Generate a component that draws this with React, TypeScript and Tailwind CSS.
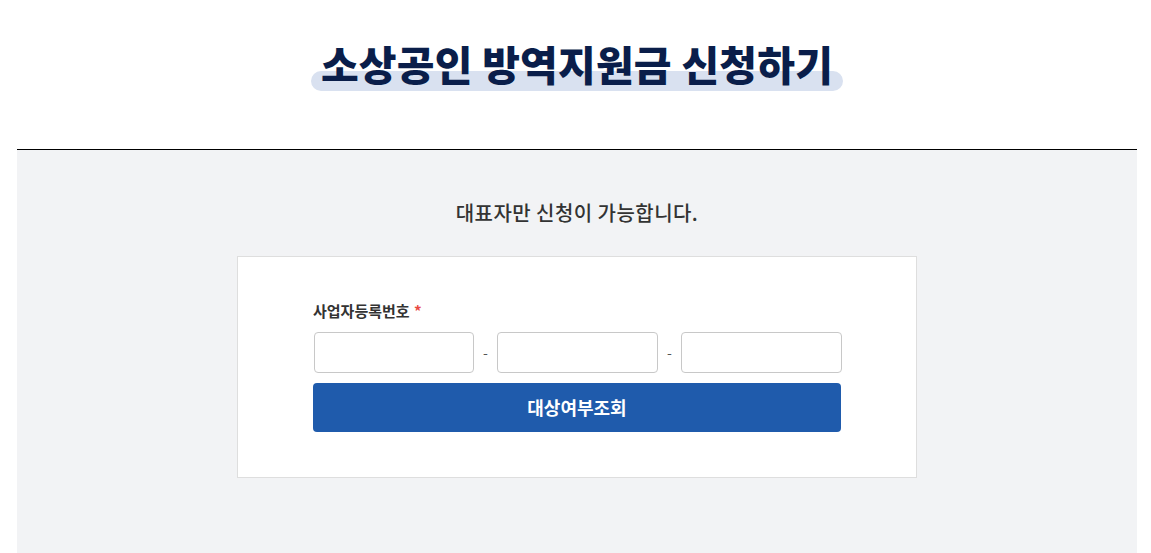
export default function App() {
  const font = { fontFamily: '"Noto Sans CJK KR", "Noto Sans", sans-serif' };
  return (
    <div className="w-[1151px] h-[553px] overflow-hidden bg-white" style={font}>
      <div className="ml-[17px] w-[1120px]">
        <div className="h-[149px] flex justify-center pt-[37px]">
          <div className="relative h-[56px] flex items-start">
            <div className="absolute left-[1px] right-[1px] top-[34px] h-[20px] rounded-full bg-[#d9e1f0]" />
            <h1 className="relative px-[11px] text-[41px] leading-[52px] font-black text-[#0a1e4a] tracking-[0.2px]">
              소상공인 방역지원금 신청하기
            </h1>
          </div>
        </div>
        <div className="border-t border-black bg-[#f2f3f5] h-[404px] pt-[49px] flex flex-col items-center">
          <p className="text-[20px] leading-[28px] font-medium text-[#333] tracking-[0.45px]">
            대표자만 신청이 가능합니다.
          </p>
          <div className="mt-[29px] w-[680px] h-[222px] bg-white border border-[#dedede] pt-[44px] pl-[75px]">
            <div className="w-[528px]">
              <div className="text-[15px] leading-[20px] font-bold text-[#333]">
                사업자등록번호 <span className="ml-[1px] text-[#e94a43]">*</span>
              </div>
              <div className="mt-[11px] flex items-center w-[529px]">
                <input className="shrink-0 w-[160px] h-[41px] ml-[1px] border border-[#c8c8c8] rounded-[4px] bg-white" />
                <span className="shrink-0 w-[23px] text-center text-[14px] text-[#555]">-</span>
                <input className="shrink-0 w-[161px] h-[41px] border border-[#c8c8c8] rounded-[4px] bg-white" />
                <span className="shrink-0 w-[23px] text-center text-[14px] text-[#555]">-</span>
                <input className="shrink-0 w-[161px] h-[41px] border border-[#c8c8c8] rounded-[4px] bg-white" />
              </div>
              <button className="mt-[10px] w-[528px] h-[49px] rounded-[4px] bg-[#1f5bac] text-white text-[18px] font-bold">
                대상여부조회
              </button>
            </div>
          </div>
        </div>
      </div>
    </div>
  );
}
